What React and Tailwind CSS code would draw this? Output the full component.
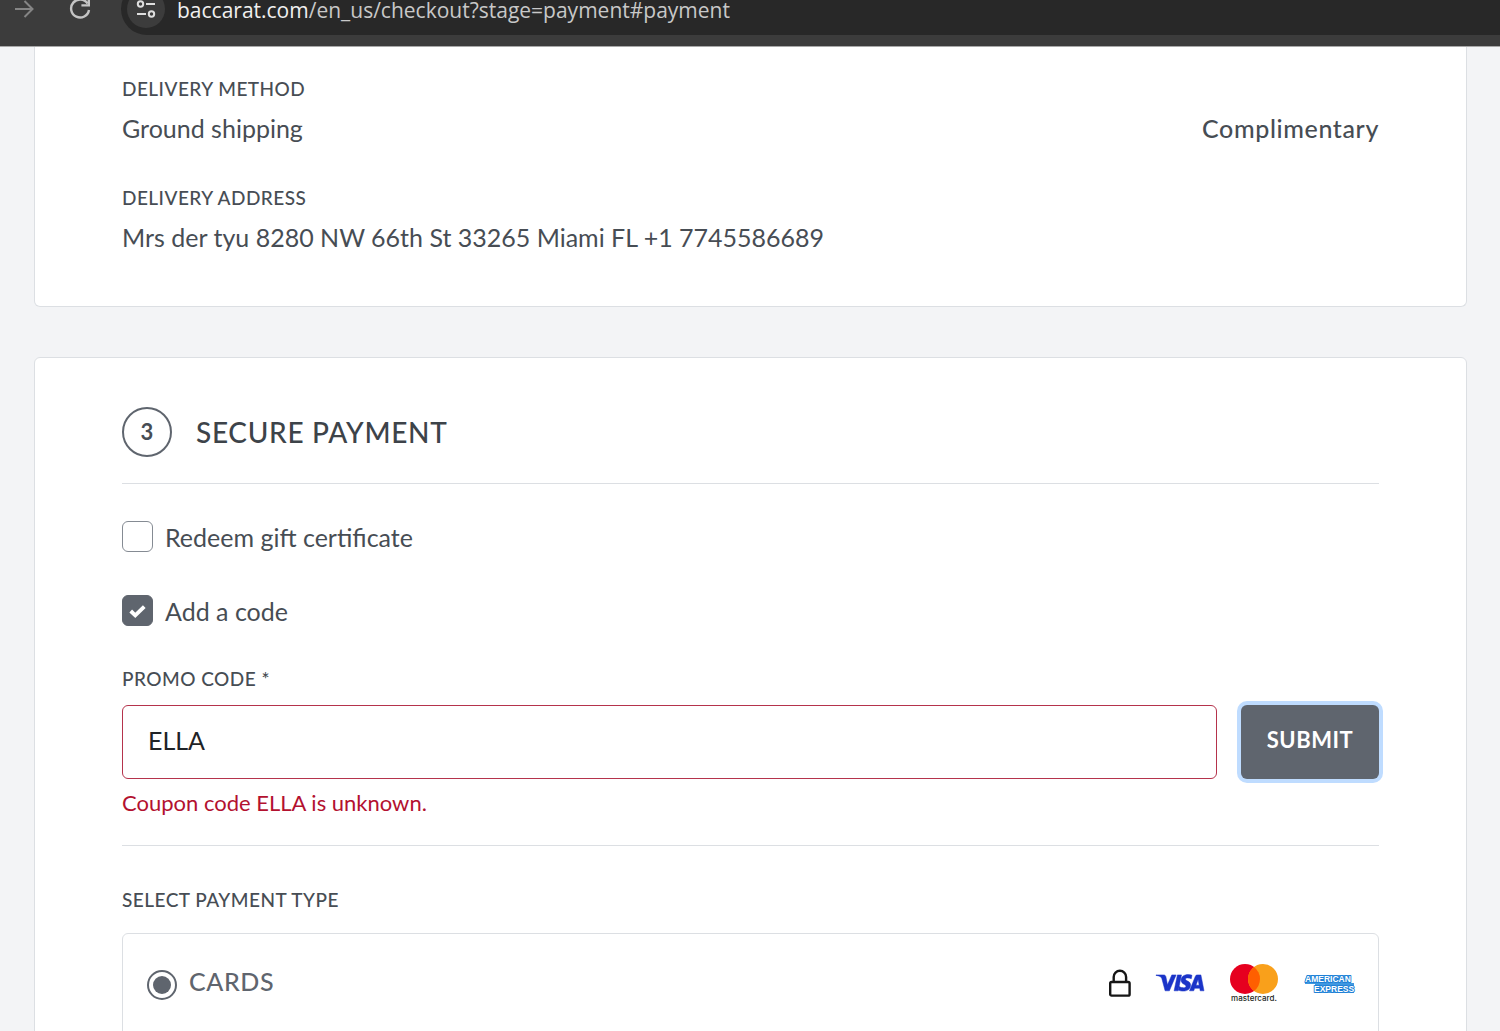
import { useState } from 'react';

const LockIcon = () => (
  <svg className="w-[22px] h-7" viewBox="0 0 22 28" fill="none" stroke="#161616" strokeWidth="2.4" aria-hidden="true">
    <rect x="1.2" y="13" width="19.4" height="13.600" rx="1.4" />
    <path d="M4.700 13V8a6.200 6.200 0 0 1 12.400 0v5" />
  </svg>
);

const VisaLogo = () => (
  <svg className="w-12 h-[18px] overflow-visible" viewBox="0 0 48 18" fill="#1a34c8" stroke="#1a34c8" strokeWidth=".5" role="img" aria-label="Visa">
    <path d="M0 .9h7.6c1.2 0 2 .6 2.3 1.8l1.6 8.1L15.8.9h4.3l-6.7 15.9H9.1L5.8 4.4C5.3 2.9 3.6 1.8 0 1.4z" />
    <path d="M21.4.9h4.1l-3.3 15.9h-4.1z" />
    <path d="M36 1.3l-.7 3.4c-1-.5-2.2-.8-3.5-.8-1.5 0-2.3.5-2.3 1.2 0 2 5.1 1.9 5.1 6 0 3.7-3 6-7.3 6-2 0-3.8-.4-4.8-1l.7-3.5c1.2.8 2.9 1.2 4.2 1.2 1.6 0 2.6-.6 2.6-1.5 0-2-4.9-2-4.9-6C24.9 2.9 28.1.6 32.2.6c1.6 0 2.9.3 3.8.7z" />
    <path fillRule="evenodd" d="M41.2.9h3.7L48 16.800h-3.800l-.5-2.500h-5l-1 2.500h-4.200L39.400 2.200c.3-.8.9-1.300 1.800-1.300zm.9 4.700L40 11.200h3.200z" />
  </svg>
);

const MastercardLogo = () => (
  <svg className="w-[50px] h-10" viewBox="0 0 50 40" role="img" aria-label="Mastercard">
    <circle cx="16" cy="16" r="15" fill="#e6001f" />
    <circle cx="34" cy="16" r="15" fill="#f9a01b" />
    <path d="M25 4a15 15 0 0 1 0 24a15 15 0 0 1 0-24z" fill="#ff5f00" />
    <text x="25" y="38" textAnchor="middle" fontFamily="Inter, sans-serif" fontSize="8" fontWeight="500" fill="#231f20">mastercard.</text>
  </svg>
);

const AmexLogo = () => (
  <svg className="w-[50px] h-5 overflow-visible" viewBox="0 0 50 20" role="img" aria-label="American Express">
    <path d="M3 2h44v8h3v10H11v-9H1V7z" fill="#3f97e0" />
    <g
      fontFamily="'Liberation Sans', sans-serif"
      fontSize="8.500"
      fontWeight="700"
      fill="#ffffff"
      stroke="#1f80d6"
      strokeWidth="1.800"
      strokeLinejoin="round"
      paintOrder="stroke"
    >
      <text x="1" y="9">AMERICAN</text>
      <text x="10" y="18.500">EXPRESS</text>
    </g>
  </svg>
);

const BrowserBar = () => (
  <header className="h-[47px] overflow-hidden flex items-end bg-[#3c3c3c] border-b border-[#a8a8a8] pb-[11px]">
    <div className="flex items-center h-[52px] w-full flex-shrink-0">
      <button type="button" aria-label="Forward" className="w-[34px] flex justify-end">
        <svg className="w-5 h-5" viewBox="0 0 20 20" fill="none" stroke="#858585" strokeWidth="2">
          <path d="M1 10h17M10.500 2l8 8-8 8" />
        </svg>
      </button>
      <button type="button" aria-label="Reload" className="w-[57px] flex justify-end">
        <svg className="w-[22px] h-[22px]" viewBox="0 0 22 22" fill="none" stroke="#c4c4c4" strokeWidth="2.400">
          <path d="M18.600 5.500A9 9 0 1 0 20 12" />
          <path d="M19.800 0v7.400h-7.400" />
        </svg>
      </button>
      <div className="flex-1 ml-[30px] h-full rounded-l-full bg-[#282828] flex items-center gap-3 pl-1.5">
        <button type="button" aria-label="Site information" className="w-[38px] h-[38px] rounded-full bg-[#3c3c3c] flex items-center justify-center">
          <svg className="w-5 h-5" viewBox="0 0 20 20" fill="none" stroke="#dedede" strokeWidth="2">
            <circle cx="4.500" cy="5" r="2.700" />
            <path d="M10 5h9M1 15h9" />
            <circle cx="15.500" cy="15" r="2.700" />
          </svg>
        </button>
        <p className="pt-0.5 text-[21px] leading-[18px] text-[#c8c8c8] whitespace-nowrap font-['Open_Sans',sans-serif]">
          <span className="text-[#f0f0f0]">baccarat.com</span>/en_us/checkout?stage=payment#payment
        </p>
      </div>
    </div>
  </header>
);

const Label = ({ children }) => (
  <h3 className="text-[19px] leading-6 font-medium tracking-wide text-[#474d54]">{children}</h3>
);

const CheckField = ({ id, label, checked, onChange }) => (
  <div className="flex items-center gap-3">
    <span className="relative flex">
      <input
        id={id}
        type="checkbox"
        checked={checked}
        onChange={e => onChange(e.target.checked)}
        className="appearance-none w-[31px] h-[31px] rounded-md border border-[#858b93] bg-white checked:bg-[#5f656e] checked:border-[#5f656e]"
      />
      {checked && (
        <svg className="absolute inset-0 w-[31px] h-[31px] pointer-events-none" viewBox="0 0 32 32" fill="none" stroke="#ffffff" strokeWidth="4">
          <path d="M9 16.500l4.700 4.500L23 12" />
        </svg>
      )}
    </span>
    <label htmlFor={id} className="text-[25px] leading-8 pt-0.5">{label}</label>
  </div>
);

const App = () => {
  const [gift, setGift] = useState(false);
  const [addCode, setAddCode] = useState(true);
  const [code, setCode] = useState('ELLA');

  return (
    <div className="h-screen overflow-hidden bg-gray-100 text-[#474d54] font-[Lato,sans-serif]">
      <BrowserBar />
      <main className="pl-[34px] pr-[33px]">
        {/* Delivery summary */}
        <section className="bg-white border border-t-0 border-[#dcdfe3] rounded-b-md px-[87px] pt-[30px] pb-[53px] mb-[50px]">
          <Label>DELIVERY METHOD</Label>
          <div className="flex justify-between mt-[11px] text-[25px] leading-8">
            <p>Ground shipping</p>
            <p className="font-medium tracking-wide">Complimentary</p>
          </div>
          <div className="mt-[42px]">
            <Label>DELIVERY ADDRESS</Label>
            <p className="mt-[11px] text-[25px] leading-8">Mrs der tyu 8280 NW 66th St 33265 Miami FL +1 7745586689</p>
          </div>
        </section>

        {/* Payment step */}
        <section className="bg-white border border-[#dcdfe3] rounded-md px-[87px] pt-[49px]">
          <div className="flex items-center gap-6 pb-[26px] border-b border-[#dcdfe3]">
            <span className="w-[50px] h-[50px] rounded-full border-2 border-[#5f656e] flex items-center justify-center text-[22px] leading-8 font-bold">3</span>
            <h2 className="text-[28px] leading-8 font-medium tracking-wide text-[#3d4349]">SECURE PAYMENT</h2>
          </div>

          <div className="flex flex-col gap-10 mt-[35px]">
            <CheckField id="gift" label="Redeem gift certificate" checked={gift} onChange={setGift} />
            <CheckField id="add-code" label="Add a code" checked={addCode} onChange={setAddCode} />
          </div>

          <form className="mt-10 pb-[26px] border-b border-[#dcdfe3]" onSubmit={e => e.preventDefault()}>
            <label htmlFor="promo" className="block text-[19px] leading-6 font-medium tracking-wide">PROMO CODE *</label>
            <div className="flex gap-6 mt-3.5">
              <input
                id="promo"
                type="text"
                value={code}
                onChange={e => setCode(e.target.value)}
                className="flex-1 min-w-0 h-[74px] px-[25px] pb-1 rounded-md border border-[#b5334c] bg-white text-[25px] text-[#1f2327] outline-none"
              />
              <button type="submit" className="w-[138px] h-[74px] pb-1.5 rounded-md bg-[#5f656e] ring-4 ring-[#bfdcff] text-white text-[22px] font-bold tracking-wide">
                SUBMIT
              </button>
            </div>
            <p className="mt-2 text-[22px] leading-8 text-[#b3112f]">Coupon code ELLA is unknown.</p>
          </form>

          <div className="mt-[42px]">
            <Label>SELECT PAYMENT TYPE</Label>
          </div>
          <div className="mt-[21px] h-[140px] border border-[#dcdfe3] rounded-md px-6 pt-[29px]">
            <div className="flex items-center justify-between">
              <div className="flex items-center gap-3">
                <span className="flex pt-1">
                  <span className="relative flex">
                    <input id="cards" type="radio" name="payment" defaultChecked className="appearance-none w-[30px] h-[30px] rounded-full border-2 border-[#5f656e] bg-white" />
                    <span className="absolute inset-0 m-auto w-[18px] h-[18px] rounded-full bg-[#5f656e] pointer-events-none" />
                  </span>
                </span>
                <label htmlFor="cards" className="text-[25px] leading-8 pb-1 font-medium tracking-wide text-[#5f656e]">CARDS</label>
              </div>
              <div className="flex items-center gap-[25px]">
                <LockIcon />
                <VisaLogo />
                <MastercardLogo />
                <AmexLogo />
              </div>
            </div>
          </div>
        </section>
      </main>
    </div>
  );
};
export default App;
